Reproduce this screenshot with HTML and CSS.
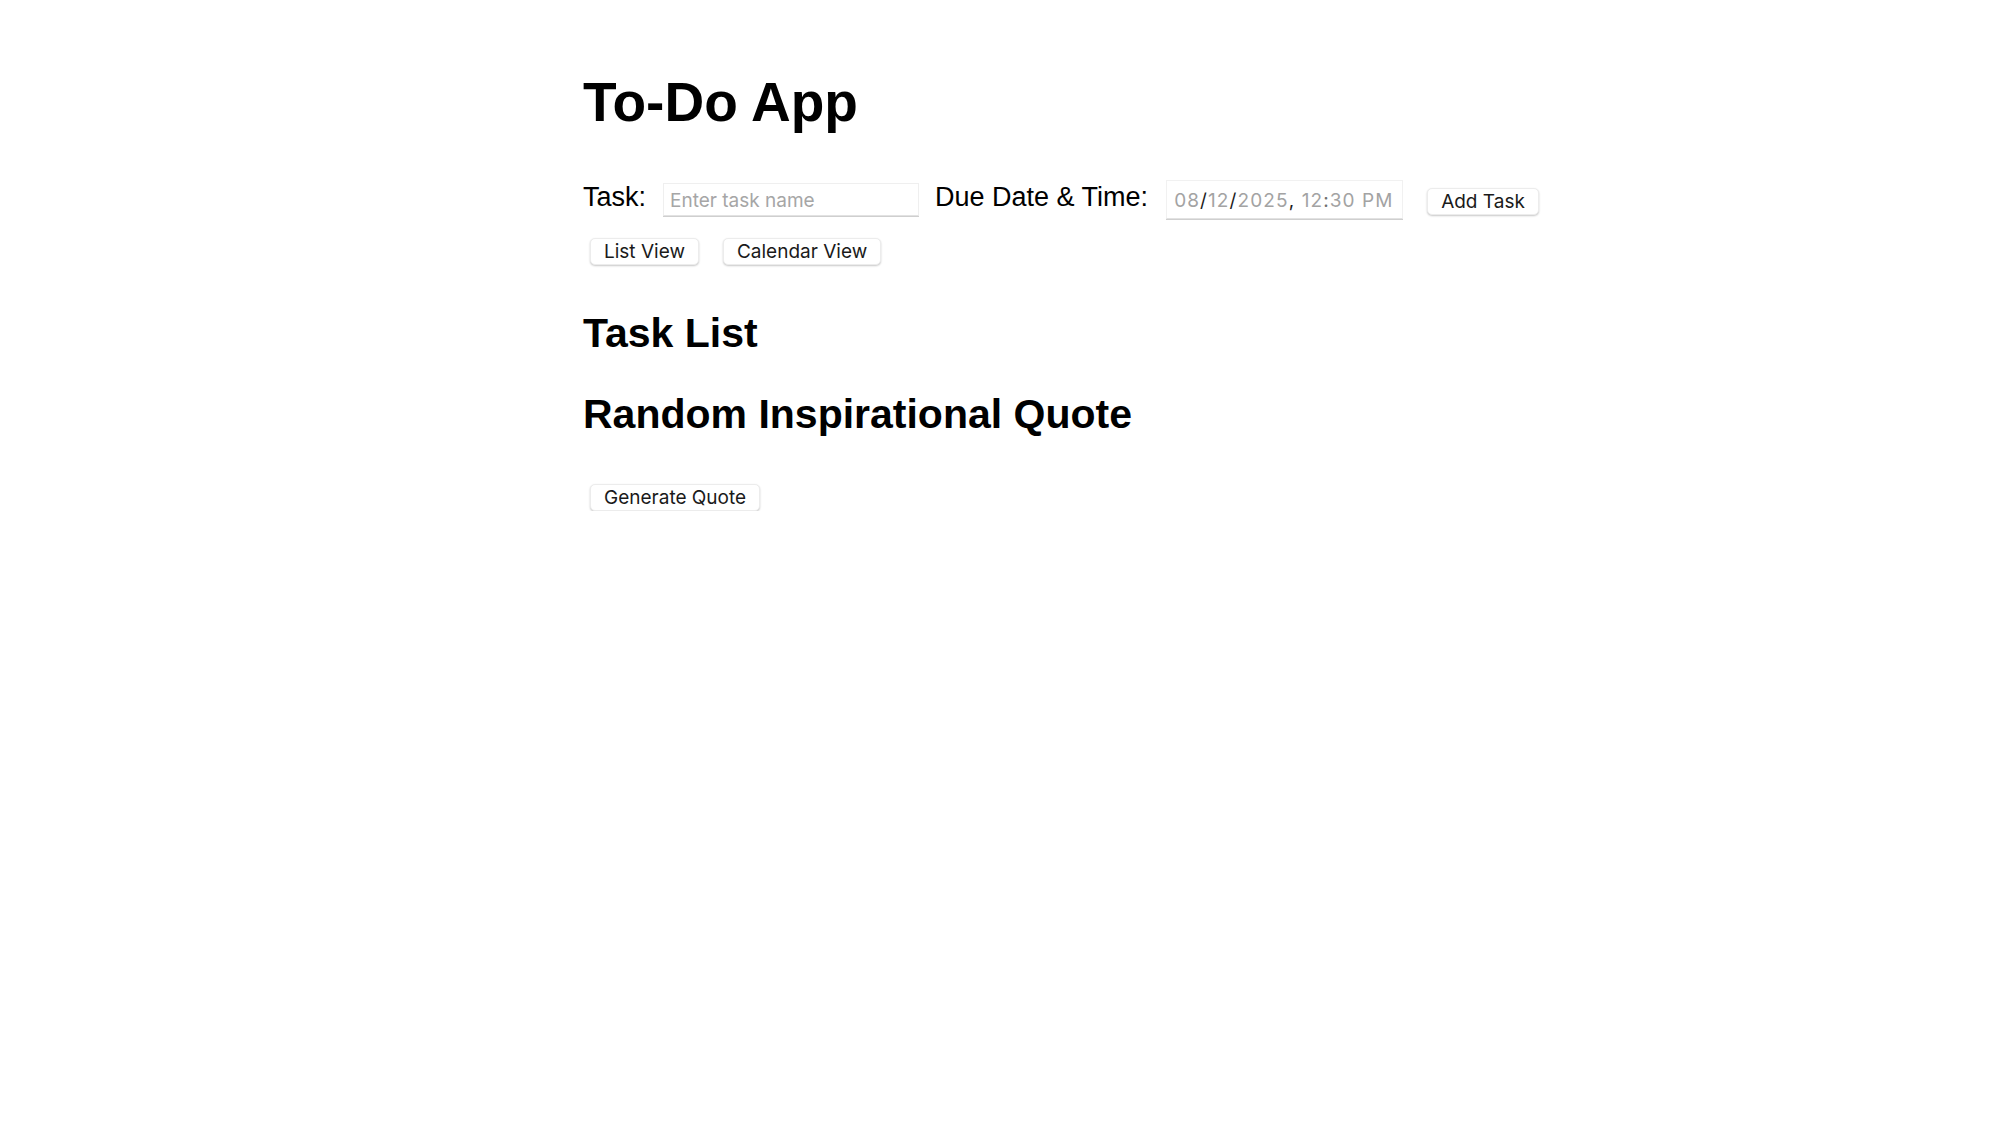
FILE: index.html
```html
<!DOCTYPE html>
<html lang="en">
<head>
<meta charset="utf-8">
<title>To-Do App</title>
<link rel="stylesheet" href="styles.css">
</head>
<body>
<main class="app">
  <h1 class="title">To-Do App</h1>
  <form class="task-form">
    <label class="field-label" for="task">Task:</label>
    <input class="task-input" id="task" type="text" placeholder="Enter task name">
    <label class="field-label due-label">Due Date &amp; Time:</label>
    <div class="date-input"><span class="dim">08</span><span class="sep">/</span><span class="dim">12</span><span class="sep">/</span><span class="dim">2025</span><span class="sep">,</span>&nbsp;<span class="dim">12</span><span class="colon">:</span><span class="dim">30 PM</span></div>
    <button class="btn add-btn" type="button">Add Task</button>
  </form>
  <div class="view-toggle">
    <button class="btn" type="button">List View</button>
    <button class="btn" type="button">Calendar View</button>
  </div>
  <h2 class="section-title task-list-title">Task List</h2>
  <ul class="task-list"></ul>
  <h2 class="section-title quote-title">Random Inspirational Quote</h2>
  <p class="quote"></p>
  <div class="quote-actions">
    <button class="btn" type="button">Generate Quote</button>
  </div>
</main>
</body>
</html>
```

FILE: styles.css
```css
html, body {
  margin: 0;
  padding: 0;
  background: #ffffff;
}

body {
  font-family: "Liberation Sans", Arial, Helvetica, sans-serif;
  color: #000000;
}

.app {
  padding: 71px 0 0 583px;
}

.title {
  margin: 0;
  font-size: 55px;
  line-height: 62px;
  font-weight: bold;
}

.task-form {
  display: flex;
  align-items: center;
  height: 39px;
  margin-top: 47px;
}

.field-label {
  font-size: 27px;
  line-height: 31px;
  margin-right: 15px;
  margin-bottom: 4px;
}

.due-label {
  margin-right: 18px;
}

.task-input {
  box-sizing: border-box;
  width: 256px;
  height: 33px;
  margin: 0 16px 0 2px;
  padding: 2px 6px 0;
  border: 1px solid #efefef;
  border-bottom-color: #e2e2e2;
  box-shadow: 0 1px 0 #cfcfcf;
  border-radius: 0;
  background: #ffffff;
  font-family: Inter, "Noto Sans", sans-serif;
  font-size: 19px;
  color: #222222;
  outline: none;
}

.task-input::placeholder {
  color: #a6a6a6;
}

.date-input {
  box-sizing: border-box;
  display: flex;
  align-items: center;
  width: 237px;
  height: 39px;
  padding: 2px 7px 0;
  margin-right: 24px;
  border: 1px solid #f1f1f1;
  border-bottom-color: #e2e2e2;
  box-shadow: 0 1px 0 #cfcfcf;
  background: #ffffff;
  font-family: Inter, "Noto Sans", sans-serif;
  font-size: 19px;
  letter-spacing: 1.1px;
  white-space: nowrap;
}

.dim {
  color: #a3a3a3;
}

.sep {
  color: #1a1a1a;
}

.colon {
  color: #6f6f6f;
}

.btn {
  box-sizing: border-box;
  height: 27px;
  padding: 0 13px;
  border: 1px solid #ececec;
  border-radius: 5px;
  background: #ffffff;
  box-shadow: 0 1px 2px rgba(0, 0, 0, 0.22);
  font-family: Inter, "Noto Sans", sans-serif;
  font-size: 19px;
  line-height: 25px;
  color: #1a1a1a;
  cursor: pointer;
}

.add-btn {
  margin-top: 3px;
}

.view-toggle {
  display: flex;
  gap: 24px;
  margin-top: 19px;
  padding-left: 7px;
}

.section-title {
  margin: 0;
  font-size: 41px;
  line-height: 46px;
  font-weight: bold;
}

.task-list-title {
  margin-top: 45px;
}

.task-list {
  margin: 0;
  padding: 0;
  list-style: none;
}

.quote-title {
  margin-top: 35px;
}

.quote {
  margin: 0;
}

.quote-actions {
  margin-top: 47px;
  padding-left: 7px;
}
```
